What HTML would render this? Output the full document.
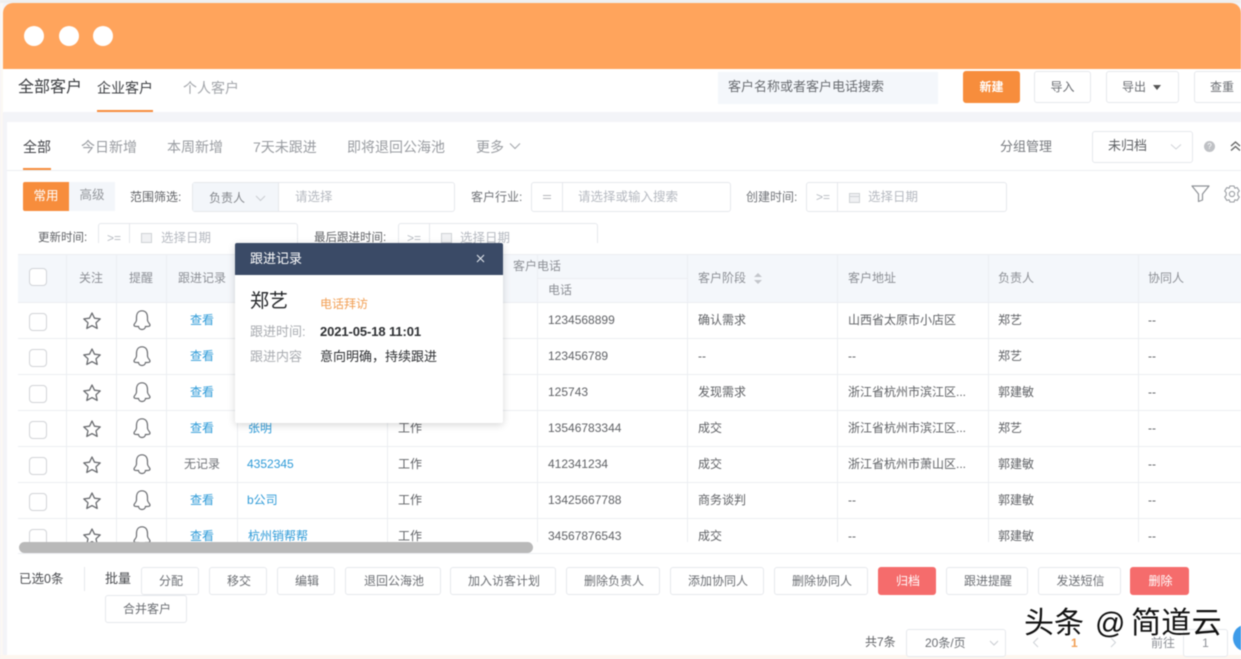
<!DOCTYPE html>
<html lang="zh"><head><meta charset="utf-8"><title>全部客户</title>
<style>
*{box-sizing:border-box;margin:0;padding:0}
html,body{width:1241px;height:659px;overflow:hidden;background:#f3f4f8}
body{position:relative;font-family:"Liberation Sans","Noto Sans CJK SC",sans-serif;color:#606266;font-size:12px}
#r{position:absolute;left:0;top:0;width:1241px;height:659px;overflow:hidden;filter:blur(.5px)}
#r div,#r span.a{position:absolute;white-space:nowrap}
.t{line-height:18px;height:18px}
.b{border:1px solid #e6e8ec;border-radius:3px;background:#fff;text-align:center;height:28px;line-height:26px;color:#6b6e73;font-size:12px;padding-left:2px}
.r{background:#f56c6c!important;border-color:#f56c6c!important;color:#fff!important}
.i{border:1px solid #e6e8ec;border-radius:3px;background:#fff;height:30px}
.g{color:#b6bac1}
.h{color:#8d9096}
.l{color:#2f9bd8}
.hl{height:1px;background:#eceef2;left:18px;width:1223px}
.vl{width:1px;background:#eceef2;top:254px;height:290px}
.c{width:18px;height:18px;border:1px solid #d2d4d8;border-radius:4px;left:29px;background:#fff}
svg{position:absolute;overflow:visible}
</style></head><body><div id="r">
<div style="left:0;top:0;width:1241px;height:3px;background:#efefef"></div>
<div style="left:0;top:3px;width:3px;height:656px;background:#fbf8f4"></div>
<div style="left:3px;top:3px;width:1238px;height:66px;background:#ffa45c;border-radius:10px 10px 0 0"></div>
<div style="left:24px;top:26px;width:20px;height:20px;border-radius:50%;background:#fff"></div>
<div style="left:59px;top:26px;width:20px;height:20px;border-radius:50%;background:#fff"></div>
<div style="left:93px;top:26px;width:20px;height:20px;border-radius:50%;background:#fff"></div>

<div style="left:3px;top:69px;width:1238px;height:43px;background:#fff"></div>
<div class="t" style="left:18px;top:79px;font-size:16px;color:#3a3c40">全部客户</div>
<div class="t" style="left:97px;top:79px;font-size:14px;color:#3f4145">企业客户</div>
<div style="left:97px;top:110px;width:56px;height:2px;background:#f78d3c"></div>
<div class="t" style="left:183px;top:79px;font-size:14px;color:#a3a6ab">个人客户</div>
<div style="left:718px;top:72px;width:220px;height:32px;background:#f4f7fb"></div>
<div class="t" style="left:728px;top:78px;font-size:13px;color:#696c71">客户名称或者客户电话搜索</div>
<div class="b" style="left:963px;top:71px;width:57px;height:32px;line-height:30px;background:#f78d3c;border-color:#f78d3c;color:#fff;font-weight:bold;padding:0">新建</div>
<div class="b" style="left:1034px;top:71px;width:57px;height:32px;line-height:30px;padding:0">导入</div>
<div class="b" style="left:1106px;top:71px;width:73px;height:32px;line-height:30px;text-align:left;padding-left:15px">导出</div>
<svg style="left:1153px;top:85px" width="8" height="5"><path d="M0 0H8L4 5Z" fill="#555"/></svg>
<div class="b" style="left:1194px;top:71px;width:60px;height:32px;line-height:30px;text-align:left;padding-left:15px">查重</div>

<div style="left:7px;top:122px;width:1234px;height:533px;background:#fff"></div>
<div style="left:0;top:655px;width:1241px;height:4px;background:#fdf6ef"></div>

<div class="t" style="left:23px;top:138px;font-size:14px;color:#43454a">全部</div>
<div class="t" style="left:81px;top:138px;font-size:14px;color:#999ca1">今日新增</div>
<div class="t" style="left:167px;top:138px;font-size:14px;color:#999ca1">本周新增</div>
<div class="t" style="left:253px;top:138px;font-size:14px;color:#999ca1">7天未跟进</div>
<div class="t" style="left:347px;top:138px;font-size:14px;color:#999ca1">即将退回公海池</div>
<div class="t" style="left:476px;top:138px;font-size:14px;color:#999ca1">更多</div>
<svg style="left:509px;top:142px" width="12" height="8"><path d="M1 1.500 6 6.500 11 1.500" fill="none" stroke="#a3a6ab" stroke-width="1.100"/></svg>
<div style="left:7px;top:170px;width:1234px;height:1px;background:#eceef2"></div>
<div style="left:23px;top:168px;width:28px;height:2px;background:#f78d3c"></div>
<div class="t" style="left:1000px;top:138px;font-size:13px;color:#777a7f">分组管理</div>
<div class="i" style="left:1092px;top:131px;width:101px;height:32px"></div>
<div class="t" style="left:1108px;top:137px;font-size:13px;color:#606266">未归档</div>
<svg style="left:1170px;top:143px" width="12" height="8"><path d="M1 1.500 6 6 11 1.500" fill="none" stroke="#d0d3d8" stroke-width="1"/></svg>
<div style="left:1204px;top:141px;width:11px;height:11px;border-radius:50%;background:#bfc1c5;color:#fff;font-size:8px;line-height:11px;text-align:center">?</div>
<svg style="left:1230px;top:141px" width="11" height="11"><path d="M1 5 5.500 1 10 5M1 9.500 5.500 5.500 10 9.500" fill="none" stroke="#666" stroke-width="1.400"/></svg>

<div style="left:23px;top:182px;width:46px;height:29px;background:#f78d3c;border-radius:2px 0 0 2px;color:#fff;text-align:center;line-height:28px;font-size:12.500px">常用</div>
<div style="left:69px;top:182px;width:46px;height:29px;background:#f3f6fa;color:#94979c;text-align:center;line-height:27px;font-size:12.500px">高级</div>
<div class="t" style="left:130px;top:188px;color:#606266">范围筛选:</div>
<div class="i" style="left:192px;top:182px;width:263px"></div>
<div style="left:193px;top:183px;width:86px;height:28px;background:#f3f6fa;border-right:1px solid #e6e8ec"></div>
<div class="t" style="left:209px;top:189px;color:#83868b">负责人</div>
<svg style="left:255px;top:195px" width="11" height="7"><path d="M1 1 5.500 5.500 10 1" fill="none" stroke="#c9ccd1"/></svg>
<div class="t g" style="left:295px;top:188px;font-size:12.500px">请选择</div>
<div class="t" style="left:471px;top:188px;color:#707378">客户行业:</div>
<div class="i" style="left:531px;top:182px;width:200px"></div>
<div style="left:562px;top:182px;width:1px;height:30px;background:#e6e8ec"></div>
<div style="left:543px;top:195px;width:8px;height:4px;border-top:1px solid #b3b6bb;border-bottom:1px solid #b3b6bb"></div>
<div class="t g" style="left:578px;top:188px;font-size:12.500px">请选择或输入搜索</div>
<div class="t" style="left:746px;top:188px;color:#707378">创建时间:</div>
<div class="i" style="left:806px;top:182px;width:201px"></div>
<div style="left:837px;top:182px;width:1px;height:30px;background:#e6e8ec"></div>
<div class="t g" style="left:816px;top:188px">&gt;=</div>
<svg style="left:849px;top:192px" width="11" height="11"><rect x=".5" y="1.500" width="10" height="9" fill="#f0f1f3" stroke="#cfd2d6"/><path d="M.5 4.500H10.500" stroke="#cfd2d6"/></svg>
<div class="t g" style="left:868px;top:188px;font-size:12.500px">选择日期</div>
<svg style="left:1191px;top:185px" width="19" height="18"><path d="M1 1H18L11.500 9V15L7.500 16.500V9Z" fill="none" stroke="#8f9297" stroke-width="1.200" stroke-linejoin="round"/></svg>
<svg style="left:1223px;top:185px" width="18" height="18"><path d="M7 1H11L11.800 3.200 14.200 2.600 16.300 6 14.800 7.600V10.400L16.300 12 14.200 15.400 11.800 14.800 11 17H7L6.200 14.800 3.800 15.400 1.700 12 3.200 10.400V7.600L1.700 6 3.800 2.600 6.200 3.200Z" fill="none" stroke="#9a9da2" stroke-width="1.100" stroke-linejoin="round"/><circle cx="9" cy="9" r="2.600" fill="none" stroke="#9a9da2" stroke-width="1.100"/></svg>

<div class="t" style="left:38px;top:229px;color:#606266;font-size:11.500px">更新时间:</div>
<div class="i" style="left:98px;top:223px;width:200px;height:40px"></div>
<div style="left:129px;top:223px;width:1px;height:30px;background:#e6e8ec"></div>
<div class="t g" style="left:107px;top:229px">&gt;=</div>
<div class="t g" style="left:161px;top:229px;font-size:12.500px">选择日期</div>
<svg style="left:141px;top:232px" width="11" height="11"><rect x=".5" y="1.500" width="10" height="9" fill="#f0f1f3" stroke="#cfd2d6"/></svg>
<div class="t" style="left:314px;top:229px;color:#606266;font-size:11.500px">最后跟进时间:</div>
<div class="i" style="left:398px;top:223px;width:200px;height:40px"></div>
<div style="left:429px;top:223px;width:1px;height:30px;background:#e6e8ec"></div>
<div class="t g" style="left:407px;top:229px">&gt;=</div>
<div class="t g" style="left:460px;top:229px;font-size:12.500px">选择日期</div>
<svg style="left:441px;top:232px" width="11" height="11"><rect x=".5" y="1.500" width="10" height="9" fill="#f0f1f3" stroke="#cfd2d6"/></svg>
<div style="left:7px;top:243px;width:1234px;height:11px;background:#fff"></div>

<!-- table -->
<div style="left:18px;top:254px;width:1223px;height:49px;background:#f4f7fb"></div>
<div style="left:537px;top:278px;width:150px;height:25px;border-top:1px solid #eceef2;background:#f7f9fc"></div>
<div style="left:7px;top:544px;width:1234px;height:10px;background:#fff"></div>
<div class="hl" style="top:254px"></div><div class="hl" style="top:302px"></div><div class="hl" style="top:338px"></div><div class="hl" style="top:374px"></div><div class="hl" style="top:410px"></div><div class="hl" style="top:446px"></div><div class="hl" style="top:482px"></div><div class="hl" style="top:518px"></div><div class="hl" style="top:553px"></div>
<div class="vl" style="left:66px"></div><div class="vl" style="left:116px"></div><div class="vl" style="left:166px"></div><div class="vl" style="left:237px"></div><div class="vl" style="left:387px"></div><div class="vl" style="left:537px"></div><div class="vl" style="left:687px"></div><div class="vl" style="left:837px"></div><div class="vl" style="left:988px"></div><div class="vl" style="left:1138px"></div>
<div class="c" style="top:268px"></div><div class="c" style="top:313px"></div><div class="c" style="top:349px"></div><div class="c" style="top:385px"></div><div class="c" style="top:421px"></div><div class="c" style="top:457px"></div><div class="c" style="top:493px"></div><div class="c" style="top:529px"></div>

<div class="t h" style="left:79px;top:269px">关注</div>
<div class="t h" style="left:129px;top:269px">提醒</div>
<div class="t h" style="left:178px;top:269px">跟进记录</div>
<div class="t h" style="left:513px;top:257px">客户电话</div>
<div class="t h" style="left:548px;top:281px">电话</div>
<div class="t h" style="left:698px;top:269px">客户阶段</div>
<svg style="left:753px;top:272px" width="10" height="13"><path d="M5 1 9 5H1ZM5 12 1 8H9Z" fill="#c3c6cb"/></svg>
<div class="t h" style="left:848px;top:269px">客户地址</div>
<div class="t h" style="left:998px;top:269px">负责人</div>
<div class="t h" style="left:1148px;top:269px">协同人</div>

<svg width="0" height="0"><defs>
<g id="s"><path d="M9 1 11.500 6.200 17.200 6.900 13 10.800 14.200 16.400 9 13.600 3.800 16.400 5 10.800 .8 6.900 6.500 6.200Z" fill="none" stroke="#6a6c70" stroke-width="1.300" stroke-linejoin="round"/></g>
<g id="n"><path d="M9 .8C5 .8 3.500 4 3.500 7.500V10C3.500 12.500 1 13.500 1 15 1 16.500 2.500 16.500 5.500 16.500 6 20.500 12 20.500 12.500 16.500 15.500 16.500 17 16.500 17 15 17 13.500 14.500 12.500 14.500 10V7.500C14.500 4 13 .8 9 .8Z" fill="none" stroke="#6a6c70" stroke-width="1.200"/></g>
</defs></svg>
<svg style="left:83px;top:312px" width="18" height="18"><use href="#s"/></svg><svg style="left:133px;top:310px" width="18" height="21"><use href="#n"/></svg>
<svg style="left:83px;top:348px" width="18" height="18"><use href="#s"/></svg><svg style="left:133px;top:346px" width="18" height="21"><use href="#n"/></svg>
<svg style="left:83px;top:384px" width="18" height="18"><use href="#s"/></svg><svg style="left:133px;top:382px" width="18" height="21"><use href="#n"/></svg>
<svg style="left:83px;top:420px" width="18" height="18"><use href="#s"/></svg><svg style="left:133px;top:418px" width="18" height="21"><use href="#n"/></svg>
<svg style="left:83px;top:456px" width="18" height="18"><use href="#s"/></svg><svg style="left:133px;top:454px" width="18" height="21"><use href="#n"/></svg>
<svg style="left:83px;top:492px" width="18" height="18"><use href="#s"/></svg><svg style="left:133px;top:490px" width="18" height="21"><use href="#n"/></svg>
<svg style="left:83px;top:528px" width="18" height="18"><use href="#s"/></svg><svg style="left:133px;top:526px" width="18" height="21"><use href="#n"/></svg>

<div class="t l" style="left:190px;top:311px">查看</div><div class="t l" style="left:190px;top:347px">查看</div><div class="t l" style="left:190px;top:383px">查看</div><div class="t l" style="left:190px;top:419px">查看</div><div class="t" style="left:184px;top:455px;color:#707378">无记录</div><div class="t l" style="left:190px;top:491px">查看</div><div class="t l" style="left:190px;top:527px">查看</div>

<div class="t l" style="left:248px;top:419px">张明</div><div class="t l" style="left:247px;top:455px">4352345</div><div class="t l" style="left:247px;top:491px">b公司</div><div class="t l" style="left:248px;top:527px">杭州销帮帮</div>
<div class="t" style="left:398px;top:419px">工作</div><div class="t" style="left:398px;top:455px">工作</div><div class="t" style="left:398px;top:491px">工作</div><div class="t" style="left:398px;top:527px">工作</div>

<div class="t" style="left:548px;top:311px">1234568899</div><div class="t" style="left:548px;top:347px">123456789</div><div class="t" style="left:548px;top:383px">125743</div><div class="t" style="left:548px;top:419px">13546783344</div><div class="t" style="left:548px;top:455px">412341234</div><div class="t" style="left:548px;top:491px">13425667788</div><div class="t" style="left:548px;top:527px">34567876543</div>

<div class="t" style="left:698px;top:311px">确认需求</div><div class="t" style="left:698px;top:347px">--</div><div class="t" style="left:698px;top:383px">发现需求</div><div class="t" style="left:698px;top:419px">成交</div><div class="t" style="left:698px;top:455px">成交</div><div class="t" style="left:698px;top:491px">商务谈判</div><div class="t" style="left:698px;top:527px">成交</div>

<div class="t" style="left:848px;top:311px">山西省太原市小店区</div><div class="t" style="left:848px;top:347px">--</div><div class="t" style="left:848px;top:383px">浙江省杭州市滨江区...</div><div class="t" style="left:848px;top:419px">浙江省杭州市滨江区...</div><div class="t" style="left:848px;top:455px">浙江省杭州市萧山区...</div><div class="t" style="left:848px;top:491px">--</div><div class="t" style="left:848px;top:527px">--</div>

<div class="t" style="left:998px;top:311px">郑艺</div><div class="t" style="left:998px;top:347px">郑艺</div><div class="t" style="left:998px;top:383px">郭建敏</div><div class="t" style="left:998px;top:419px">郑艺</div><div class="t" style="left:998px;top:455px">郭建敏</div><div class="t" style="left:998px;top:491px">郭建敏</div><div class="t" style="left:998px;top:527px">郭建敏</div>

<div class="t" style="left:1148px;top:311px">--</div><div class="t" style="left:1148px;top:347px">--</div><div class="t" style="left:1148px;top:383px">--</div><div class="t" style="left:1148px;top:419px">--</div><div class="t" style="left:1148px;top:455px">--</div><div class="t" style="left:1148px;top:491px">--</div><div class="t" style="left:1148px;top:527px">--</div>

<div style="left:7px;top:542px;width:1234px;height:11px;background:#fff"></div>
<div style="left:19px;top:542px;width:514px;height:11px;border-radius:6px;background:#b9b9b9"></div>

<!-- popup -->
<div style="left:235px;top:243px;width:268px;height:180px;background:#fff;border-radius:2px;box-shadow:0 2px 8px rgba(0,0,0,.16)"></div>
<div style="left:235px;top:243px;width:268px;height:32px;background:#3a4a66;border-radius:2px 2px 0 0"></div>
<div class="t" style="left:250px;top:250px;color:#fff;font-size:13px">跟进记录</div>
<svg style="left:476px;top:254px" width="9" height="9"><path d="M1 1 8 8M8 1 1 8" stroke="#dfe3ea" stroke-width="1.100"/></svg>
<div style="left:250px;top:290px;height:24px;line-height:24px;font-size:19px;color:#26282b">郑艺</div>
<div class="t" style="left:320px;top:295px;color:#f2a056">电话拜访</div>
<div class="t" style="left:250px;top:323px;color:#a9acb1;font-size:13px">跟进时间:</div>
<div class="t" style="left:320px;top:323px;color:#2e3033;font-size:13px;font-weight:bold;letter-spacing:-.1px">2021-05-18 11:01</div>
<div class="t" style="left:250px;top:348px;color:#a9acb1;font-size:13px">跟进内容</div>
<div class="t" style="left:320px;top:348px;color:#2e3033;font-size:13px">意向明确，持续跟进</div>

<!-- footer -->
<div class="t" style="left:19px;top:570px;color:#4a4c50;font-size:12.500px">已选0条</div>
<div style="left:84px;top:567px;width:1px;height:24px;background:#e6e8ec"></div>
<div class="t" style="left:105px;top:570px;color:#4a4c50;font-size:13px">批量</div>
<div class="b" style="left:141px;top:567px;width:58px">分配</div>
<div class="b" style="left:209px;top:567px;width:58px">移交</div>
<div class="b" style="left:277px;top:567px;width:58px">编辑</div>
<div class="b" style="left:345px;top:567px;width:96px">退回公海池</div>
<div class="b" style="left:450px;top:567px;width:106px">加入访客计划</div>
<div class="b" style="left:566px;top:567px;width:94px">删除负责人</div>
<div class="b" style="left:670px;top:567px;width:94px">添加协同人</div>
<div class="b" style="left:774px;top:567px;width:94px">删除协同人</div>
<div class="b r" style="left:878px;top:567px;width:58px">归档</div>
<div class="b" style="left:946px;top:567px;width:82px">跟进提醒</div>
<div class="b" style="left:1038px;top:567px;width:83px">发送短信</div>
<div class="b r" style="left:1130px;top:567px;width:59px">删除</div>
<div class="b" style="left:105px;top:595px;width:82px">合并客户</div>

<div class="t" style="left:865px;top:633px;color:#606266">共7条</div>
<div class="i" style="left:906px;top:629px;width:100px;height:28px"></div>
<div class="t" style="left:925px;top:634px;color:#6b6e73">20条/页</div>
<svg style="left:989px;top:640px" width="10" height="6"><path d="M1 1 5 5 9 1" fill="none" stroke="#c9ccd1"/></svg>
<svg style="left:1032px;top:637px" width="7" height="11"><path d="M6 1 1.500 5.500 6 10" fill="none" stroke="#d0d3d8"/></svg>
<div class="t" style="left:1071px;top:634px;color:#f2a056;font-weight:bold">1</div>
<svg style="left:1110px;top:637px" width="7" height="11"><path d="M1 1 5.500 5.500 1 10" fill="none" stroke="#d0d3d8"/></svg>
<div class="t" style="left:1151px;top:634px;color:#8d9096">前往</div>
<div class="i" style="left:1183px;top:629px;width:45px;height:28px;text-align:center;line-height:26px;color:#8d9096">1</div>
<div style="left:1233px;top:625px;width:24px;height:26px;border-radius:50%;background:#3d9be9"></div>
<div style="left:1024px;top:606px;height:36px;line-height:36px;font-size:30px;color:#111;text-shadow:1px 1px 1px #fff,-1px 0 1px rgba(255,255,255,.6)">头条</div>
<div style="left:1095px;top:606px;height:36px;line-height:36px;font-size:30px;color:#111;text-shadow:1px 1px 1px #fff,-1px 0 1px rgba(255,255,255,.6)">@</div>
<div style="left:1131px;top:606px;height:36px;line-height:36px;font-size:30px;letter-spacing:.3px;color:#111;text-shadow:1px 1px 1px #fff,-1px 0 1px rgba(255,255,255,.6)">简道云</div>
</div></body></html>
